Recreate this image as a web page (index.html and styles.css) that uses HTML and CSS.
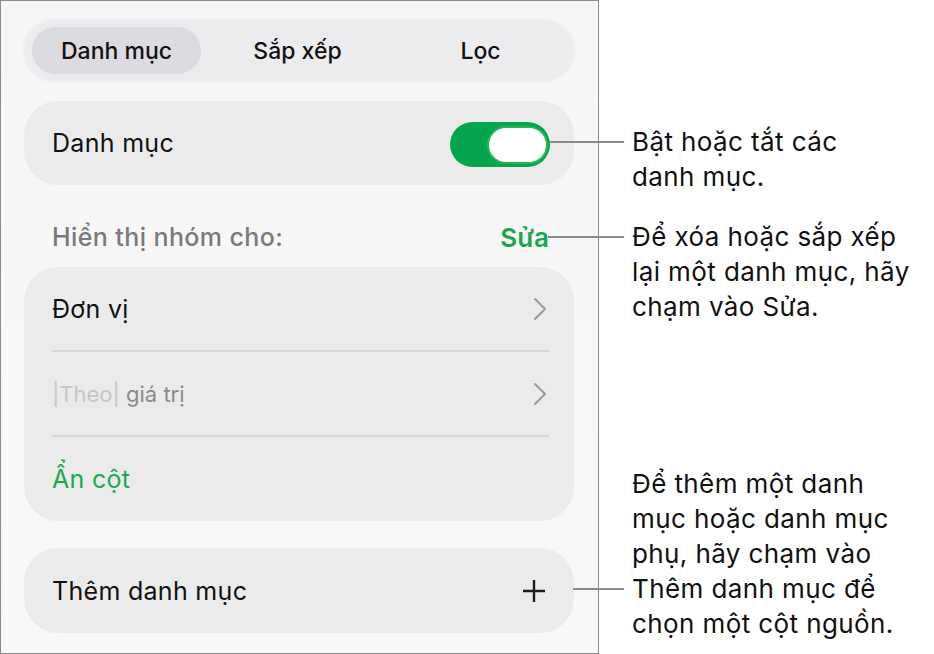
FILE: index.html
```html
<!DOCTYPE html>
<html lang="vi">
<head>
  <meta charset="UTF-8">
  <meta name="viewport" content="width=device-width, initial-scale=1.0">
  <title>Danh mục</title>
  <link rel="stylesheet" href="styles.css">
</head>
<body>
  <div class="stage">
    <div class="panel">
      <div class="segmented">
        <div class="seg-item selected">Danh mục</div>
        <div class="seg-item">Sắp xếp</div>
        <div class="seg-item">Lọc</div>
      </div>

      <div class="card toggle-card">
        <span class="row-label">Danh mục</span>
        <span class="switch on"><span class="knob"></span></span>
      </div>

      <div class="group-header">
        <span class="group-title">Hiển thị nhóm cho:</span>
        <span class="edit-link">Sửa</span>
      </div>

      <div class="card group-card">
        <div class="group-row">
          <span class="row-label">Đơn vị</span>
          <svg class="chevron" viewBox="0 0 14 24"><path d="M2 2 L12 12 L2 22"/></svg>
        </div>
        <div class="group-row">
          <span class="row-label small"><span class="placeholder">|Theo|</span> giá trị</span>
          <svg class="chevron" viewBox="0 0 14 24"><path d="M2 2 L12 12 L2 22"/></svg>
        </div>
        <div class="group-row">
          <span class="row-label green">Ẩn cột</span>
        </div>
      </div>

      <div class="card add-card">
        <span class="row-label">Thêm danh mục</span>
        <svg class="plus" viewBox="0 0 24 24"><path d="M12 1 V23 M1 12 H23"/></svg>
      </div>
    </div>

    <!-- callouts pointing at the controls -->
    <div class="callout callout-toggle">
      <span class="leader"></span>
      <p>Bật hoặc tắt các<br>danh mục.</p>
    </div>
    <div class="callout callout-edit">
      <span class="leader"></span>
      <p>Để xóa hoặc sắp xếp<br>lại một danh mục, hãy<br>chạm vào Sửa.</p>
    </div>
    <div class="callout callout-add">
      <span class="leader"></span>
      <p>Để thêm một danh<br>mục hoặc danh mục<br>phụ, hãy chạm vào<br>Thêm danh mục để<br>chọn một cột nguồn.</p>
    </div>
  </div>
</body>
</html>
```

FILE: styles.css
```css
* {
  margin: 0;
  padding: 0;
  box-sizing: border-box;
}

body {
  font-family: Inter, "Noto Sans", sans-serif;
  background: #ffffff;
  color: #111111;
}

.stage {
  position: relative;
  width: 934px;
  height: 654px;
}

.panel {
  width: 599px;
  height: 654px;
  border: 1px solid #8c8c8c;
  background: linear-gradient(180deg, #f6f6f8 0%, #f8f8f7 100%);
  padding: 19px 24px 0 23px;
}

/* segmented control */
.segmented {
  display: grid;
  grid-template-columns: 169px 1fr 1fr;
  height: 61px;
  padding: 7px 7px 7px 8px;
  border-radius: 31px;
  background: #ececee;
  box-shadow: 0 0 0 2px #f1f1f3;
}

.seg-item {
  display: flex;
  align-items: center;
  justify-content: center;
  font-size: 23px;
  font-weight: 500;
  color: #111;
  border-radius: 24px;
  padding-left: 10px;
}

.seg-item.selected {
  background: #dcdce0;
  padding-left: 0;
}

/* cards */
.card {
  background: #ebebeb;
  border-radius: 34px;
}

.toggle-card,
.add-card {
  display: flex;
  align-items: center;
  justify-content: space-between;
  height: 84px;
  padding: 0 24px 0 28px;
}

.toggle-card {
  margin-top: 20px;
}

.row-label {
  font-size: 25px;
  letter-spacing: 0.3px;
  color: #111;
}

.row-label.small {
  font-size: 22px;
  letter-spacing: 0;
  color: #8a8a8a;
}

.placeholder {
  color: #c6c6ca;
}

.row-label.green {
  color: #1aab50;
}

.switch {
  position: relative;
  width: 100px;
  height: 45px;
  border-radius: 23px;
  background: #05a54b;
  margin-top: 2px;
}

.switch .knob {
  position: absolute;
  top: 4px;
  right: 2px;
  width: 61px;
  height: 38px;
  border-radius: 19px;
  background: #ffffff;
  border: 2px solid #2bb25d;
}

.group-header {
  display: flex;
  justify-content: space-between;
  align-items: center;
  height: 82px;
  padding: 22px 25px 0 28px;
}

.group-title {
  font-size: 25px;
  font-weight: 500;
  letter-spacing: 0.4px;
  color: #7a7a7a;
}

.edit-link {
  font-size: 26px;
  font-weight: 600;
  color: #17a84c;
}

.group-card {
  padding: 0 25px 0 28px;
}

.group-row {
  display: flex;
  align-items: center;
  justify-content: space-between;
  height: 85px;
  border-bottom: 2px solid #d6d6d6;
}

.group-row:last-child {
  border-bottom: none;
  height: 84px;
}

.chevron {
  width: 14px;
  height: 24px;
  margin-right: 2px;
  fill: none;
  stroke: #9a9a9a;
  stroke-width: 2;
  stroke-linecap: round;
  stroke-linejoin: round;
}

.add-card {
  margin-top: 27px;
  height: 85px;
}

.plus {
  width: 24px;
  height: 24px;
  fill: none;
  stroke: #1c1c1c;
  stroke-width: 2.4;
  margin-right: 4px;
}

/* annotations */
.callout {
  position: absolute;
  display: flex;
  align-items: flex-start;
}

.callout p {
  font-size: 26px;
  letter-spacing: 0.4px;
  line-height: 35px;
  color: #111;
  white-space: nowrap;
}

.leader {
  display: block;
  height: 2px;
  background: #8a8a8a;
  margin-right: 8px;
}

.callout-toggle {
  left: 550px;
  top: 124px;
}

.callout-toggle .leader {
  width: 74px;
  margin-top: 17px;
}

.callout-edit {
  left: 548px;
  top: 219px;
}

.callout-edit .leader {
  width: 76px;
  margin-top: 17px;
}

.callout-add {
  left: 573px;
  top: 466px;
}

.callout-add .leader {
  width: 51px;
  margin-top: 122px;
}
```
